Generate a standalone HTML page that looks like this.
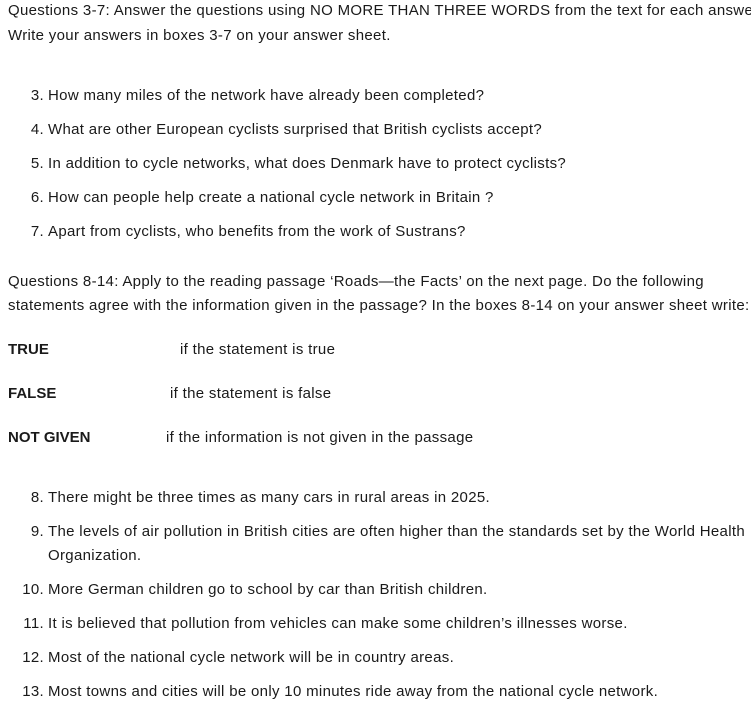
<!DOCTYPE html>
<html><head><meta charset="utf-8"><style>
body{margin:0;width:751px;height:708px;overflow:hidden;background:#fff;font-family:"Liberation Sans",sans-serif;font-size:15px;letter-spacing:0.32px;color:#1a1a1a;}
div{position:absolute;white-space:nowrap;line-height:20px;}
.n{width:40px;text-align:right;left:4px;}
.t{left:48px;}
b{font-weight:bold;letter-spacing:0;}
</style></head><body>
<div style="left:8px;top:1px">Questions 3-7: Answer the questions using NO MORE THAN THREE WORDS from the text for each answer</div>
<div style="left:8px;top:26px">Write your answers in boxes 3-7 on your answer sheet.</div>

<div class="n" style="top:86px">3.</div><div class="t" style="top:86px">How many miles of the network have already been completed?</div>
<div class="n" style="top:120px">4.</div><div class="t" style="top:120px">What are other European cyclists surprised that British cyclists accept?</div>
<div class="n" style="top:154px">5.</div><div class="t" style="top:154px">In addition to cycle networks, what does Denmark have to protect cyclists?</div>
<div class="n" style="top:188px">6.</div><div class="t" style="top:188px">How can people help create a national cycle network in Britain ?</div>
<div class="n" style="top:222px">7.</div><div class="t" style="top:222px">Apart from cyclists, who benefits from the work of Sustrans?</div>

<div style="left:8px;top:272px">Questions 8-14: Apply to the reading passage ‘Roads—the Facts’ on the next page. Do the following</div>
<div style="left:8px;top:296px">statements agree with the information given in the passage? In the boxes 8-14 on your answer sheet write:</div>

<div style="left:8px;top:340px"><b>TRUE</b></div><div style="left:180px;top:340px">if the statement is true</div>
<div style="left:8px;top:384px"><b>FALSE</b></div><div style="left:170px;top:384px">if the statement is false</div>
<div style="left:8px;top:428px"><b>NOT GIVEN</b></div><div style="left:166px;top:428px">if the information is not given in the passage</div>

<div class="n" style="top:488px">8.</div><div class="t" style="top:488px">There might be three times as many cars in rural areas in 2025.</div>
<div class="n" style="top:522px">9.</div><div class="t" style="top:522px">The levels of air pollution in British cities are often higher than the standards set by the World Health</div>
<div class="t" style="top:546px">Organization.</div>
<div class="n" style="top:580px">10.</div><div class="t" style="top:580px">More German children go to school by car than British children.</div>
<div class="n" style="top:614px">11.</div><div class="t" style="top:614px">It is believed that pollution from vehicles can make some children’s illnesses worse.</div>
<div class="n" style="top:648px">12.</div><div class="t" style="top:648px">Most of the national cycle network will be in country areas.</div>
<div class="n" style="top:682px">13.</div><div class="t" style="top:682px">Most towns and cities will be only 10 minutes ride away from the national cycle network.</div>
</body></html>
